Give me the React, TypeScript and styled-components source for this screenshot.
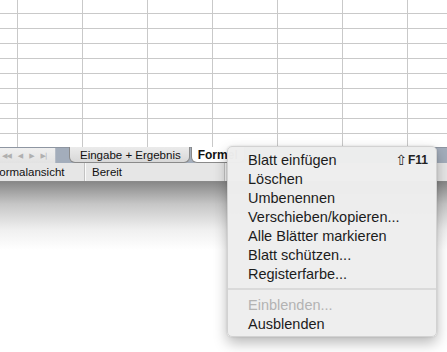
import React, { FC } from 'react';
import styled, { createGlobalStyle } from 'styled-components';

const GlobalStyle = createGlobalStyle`
  html, body {
    margin: 0;
    padding: 0;
    background: #ffffff;
    font-family: 'Liberation Sans', Arial, sans-serif;
  }
`;

const ROWS = [14, 15, 15, 15, 15, 15, 15, 15, 15, 13];
const COLS = [19, 65, 65, 65, 65, 65, 65, 65];

const menuItems = [
  { label: 'Blatt einfügen', shortcut: '⇧F11' },
  { label: 'Löschen' },
  { label: 'Umbenennen' },
  { label: 'Verschieben/kopieren...' },
  { label: 'Alle Blätter markieren' },
  { label: 'Blatt schützen...' },
  { label: 'Registerfarbe...' },
];

const App: FC = () => {
  return (
    <Page>
      <GlobalStyle />
      <Sheet>
        {ROWS.map((h, r) => (
          <Row key={r} height={h} last={r === ROWS.length - 1}>
            {COLS.map((w, c) => (
              <Cell key={c} width={w} />
            ))}
          </Row>
        ))}
      </Sheet>

      <TabBar>
        <Arrows>
          <Arrow>◀◀</Arrow>
          <Arrow>◀</Arrow>
          <Arrow>▶</Arrow>
          <Arrow>▶|</Arrow>
        </Arrows>
        <Tab>Eingabe + Ergebnis</Tab>
        <Tab active>Formel</Tab>
      </TabBar>

      <StatusBar>
        <StatusField width={94} first>
          Normalansicht
        </StatusField>
        <StatusField width={140}>Bereit</StatusField>
      </StatusBar>

      <Shade />

      <Menu>
        {menuItems.map((item) => (
          <MenuItem key={item.label}>
            <span>{item.label}</span>
            {item.shortcut && (
              <Shortcut>
                <ShiftGlyph>⇧</ShiftGlyph>F11
              </Shortcut>
            )}
          </MenuItem>
        ))}
        <Separator />
        <MenuItem disabled>Einblenden...</MenuItem>
        <MenuItem>Ausblenden</MenuItem>
      </Menu>
    </Page>
  );
};
export default App;

const Page = styled.div`
  position: relative;
  width: 447px;
  height: 352px;
  overflow: hidden;
  display: flex;
  flex-direction: column;
`;

const Sheet = styled.div`
  display: flex;
  flex-direction: column;
  height: 147px;
  margin-left: -1px;
`;

const Row = styled.div<{ height: number; last?: boolean }>`
  display: flex;
  height: ${(p) => p.height}px;
  box-sizing: border-box;
  border-bottom: ${(p) => (p.last ? 'none' : '1px solid #c9c9c9')};
`;

const Cell = styled.div<{ width: number }>`
  flex: 0 0 ${(p) => p.width}px;
  box-sizing: border-box;
  border-right: 1px solid #c9c9c9;
`;

const TabBar = styled.div`
  display: flex;
  align-items: stretch;
  height: 16px;
  background: #a3adbb;
  border-top: 1px solid #8e96a2;
  box-sizing: border-box;
`;

const Arrows = styled.div`
  display: flex;
  align-items: center;
  gap: 7px;
  width: 56px;
  padding-left: 2px;
  box-sizing: border-box;
  background: linear-gradient(#efefef, #e2e2e2);
  border-right: 1px solid #b5bcc6;
`;

const Arrow = styled.span`
  font-family: 'DejaVu Sans', sans-serif;
  font-size: 7px;
  color: #b0b0b0;
  letter-spacing: -1px;
`;

const Tab = styled.div<{ active?: boolean }>`
  display: flex;
  align-items: center;
  margin-left: ${(p) => (p.active ? '1px' : '13px')};
  margin-top: -1px;
  padding: ${(p) => (p.active ? '0 6px' : '0 8px 0 10px')};
  background: ${(p) => (p.active ? '#ffffff' : 'linear-gradient(#ebebeb, #d8d8d8)')};
  border: 1px solid #8a8a8a;
  border-top: none;
  border-radius: 0 0 6px 6px;
  font-family: 'Liberation Sans', Arial, sans-serif;
  font-weight: ${(p) => (p.active ? 700 : 400)};
  font-size: ${(p) => (p.active ? '12px' : '11.5px')};
  color: #111;
`;

const StatusBar = styled.div`
  display: flex;
  height: 18px;
  background: #e6e6e6;
  border-bottom: 1px solid #8a8a8a;
  font-family: 'Liberation Sans', Arial, sans-serif;
  font-size: 11.5px;
  color: #111;
`;

const StatusField = styled.div<{ width: number; first?: boolean }>`
  display: flex;
  align-items: center;
  width: ${(p) => p.width}px;
  margin-left: ${(p) => (p.first ? '-9px' : '0')};
  padding-left: ${(p) => (p.first ? '0' : '7px')};
  box-sizing: border-box;
  border-right: 1px solid #c2c2c2;
  box-shadow: 1px 0 0 #fafafa;
`;

const Shade = styled.div`
  flex: 1;
  background: linear-gradient(#888888 0px, #c6c6c6 22px, #f0f0f0 48px, #ffffff 68px);
`;

const Menu = styled.div`
  position: absolute;
  left: 227px;
  top: 146px;
  width: 210px;
  padding: 3px 0 3px;
  box-sizing: border-box;
  background: rgba(238, 238, 238, 0.98);
  border: 1px solid #d2d2d2;
  border-radius: 5px;
  box-shadow: 0 6px 14px rgba(0, 0, 0, 0.28), 0 0 2px rgba(0, 0, 0, 0.15);
  font-family: 'Liberation Sans', Arial, sans-serif;
  font-size: 14.5px;
  color: #1c1c1c;
`;

const MenuItem = styled.div<{ disabled?: boolean }>`
  display: flex;
  justify-content: space-between;
  align-items: center;
  height: 19px;
  padding: 0 8px 0 20px;
  color: ${(p) => (p.disabled ? '#b3b3b3' : '#1c1c1c')};
`;

const Shortcut = styled.span`
  display: flex;
  align-items: center;
  font-weight: 700;
  font-size: 12px;
  color: #222;
`;

const ShiftGlyph = styled.span`
  font-family: 'DejaVu Sans', sans-serif;
  font-size: 14px;
  font-weight: 400;
  margin-right: 1px;
`;

const Separator = styled.div`
  height: 2px;
  margin: 5px 0;
  background: #dadada;
`;
